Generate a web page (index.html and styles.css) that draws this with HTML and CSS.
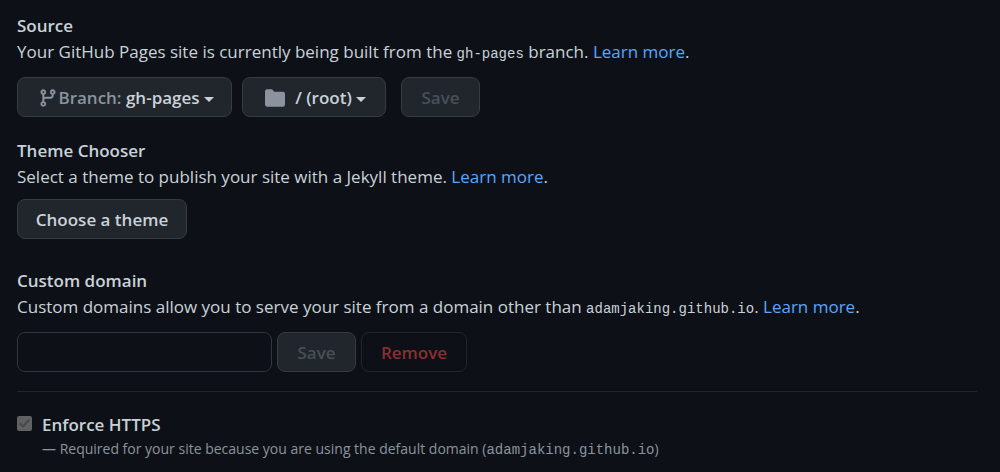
FILE: index.html
```html
<!DOCTYPE html>
<html lang="en">
<head>
<meta charset="utf-8">
<meta name="viewport" content="width=device-width, initial-scale=1">
<title>GitHub Pages settings</title>
<link rel="stylesheet" href="styles.css">
</head>
<body>
<main class="settings">
  <section class="section">
    <h2 class="heading">Source</h2>
    <p class="text">Your GitHub Pages site is currently being built from the <code class="code">gh-pages</code> branch. <a class="link" href="#">Learn more</a>.</p>
    <div class="actions actions-source">
      <button class="btn btn-branch" type="button">
        <svg class="icon" width="20" height="20" viewBox="0 0 16 16" aria-hidden="true"><path fill-rule="evenodd" d="M11.75 2.5a.75.75 0 100 1.5.75.75 0 000-1.5zm-2.25.75a2.25 2.25 0 113 2.122V6A2.5 2.5 0 0110 8.5H6a1 1 0 00-1 1v1.128a2.251 2.251 0 11-1.5 0V5.372a2.25 2.25 0 111.5 0v1.836A2.492 2.492 0 016 7h4a1 1 0 001-1v-.628A2.25 2.25 0 019.5 3.25zM4.25 12a.75.75 0 100 1.5.75.75 0 000-1.5zM3.5 3.25a.75.75 0 111.5 0 .75.75 0 01-1.5 0z"/></svg>
        <span><span class="btn-label">Branch:</span> gh-pages</span>
        <span class="caret"></span>
      </button>
      <button class="btn btn-folder" type="button">
        <svg class="icon" width="20" height="20" viewBox="0 0 16 16" aria-hidden="true"><path d="M1.75 1A1.75 1.75 0 000 2.75v10.5C0 14.216.784 15 1.75 15h12.5A1.75 1.75 0 0016 13.250v-8.500A1.750 1.750 0 0014.250 3H7.500a.25.25 0 01-.2-.1l-.9-1.2C6.070 1.260 5.550 1 5 1H1.750z"/></svg>
        <span>/ (root)</span>
        <span class="caret"></span>
      </button>
      <button class="btn btn-save" type="button" disabled>Save</button>
    </div>
  </section>

  <section class="section">
    <h2 class="heading">Theme Chooser</h2>
    <p class="text">Select a theme to publish your site with a Jekyll theme. <a class="link" href="#">Learn more</a>.</p>
    <div class="actions actions-theme">
      <button class="btn btn-theme" type="button">Choose a theme</button>
    </div>
  </section>

  <section class="section section-domain">
    <h2 class="heading"><label for="domain">Custom domain</label></h2>
    <p class="text">Custom domains allow you to serve your site from a domain other than <code class="code">adamjaking.github.io</code>. <a class="link" href="#">Learn more</a>.</p>
    <form class="actions actions-domain">
      <input class="field" id="domain" type="text">
      <button class="btn btn-save" type="button" disabled>Save</button>
      <button class="btn btn-remove" type="button" disabled>Remove</button>
    </form>
  </section>

  <section class="enforce">
    <input class="check" id="https" type="checkbox" checked disabled aria-describedby="https-note">
    <div>
      <label class="heading" for="https">Enforce HTTPS</label>
      <p class="note" id="https-note">— Required for your site because you are using the default domain (<code class="code">adamjaking.github.io</code>)</p>
    </div>
  </section>
</main>
</body>
</html>
```
FILE: styles.css
```css
* {
  box-sizing: border-box;
}

body {
  margin: 0;
  background: #0d1117;
  color: #c9d1d9;
  font: 17px/26px "Segoe UI", "Open Sans", "Noto Sans", sans-serif;
}

.settings {
  padding: 13px 23px 12px 17px;
}

.section {
  margin-bottom: 21px;
}

.section-domain {
  margin: 29px 0 0;
  padding-bottom: 19px;
  border-bottom: 1px solid #21262d;
}

.heading {
  display: block;
  margin: 0;
  font-size: 17px;
  font-weight: 600;
}

.text,
.note {
  margin: 0;
}

.link {
  color: #58a6ff;
  text-decoration: none;
}

.code {
  font-family: Consolas, "Liberation Mono", monospace;
  font-size: 14px;
  line-height: 1;
}

.actions {
  display: flex;
  flex-wrap: wrap;
}

.actions-source {
  gap: 10px;
  margin-top: 12px;
}

.actions-source .btn-save {
  margin-left: 5px;
}

.actions-theme {
  margin-top: 9px;
}

.actions-domain {
  gap: 5px;
  margin-top: 12px;
}

.btn {
  display: flex;
  align-items: center;
  justify-content: center;
  height: 40px;
  padding: 2px 17px 0;
  border: 1px solid #363b42;
  border-radius: 8px;
  background: #21262d;
  color: #c9d1d9;
  font: inherit;
  font-weight: 600;
  white-space: nowrap;
}

.btn-branch {
  min-width: 215px;
  padding-left: 20px;
}

.btn-folder {
  min-width: 144px;
  padding-left: 20px;
}

.btn-folder .icon {
  margin-right: 10px;
}

.btn-theme {
  min-width: 170px;
}

.btn-save {
  min-width: 79px;
  color: #484f58;
}

.btn-remove {
  min-width: 106px;
  border-color: #21262d;
  background: #0d1117;
  color: #8b2f2f;
}

.btn-label {
  color: #8b949e;
}

.icon {
  flex: none;
  fill: #8b949e;
}

.caret {
  margin: 2px 0 0 4px;
  border: 5px solid transparent;
  border-top-color: #c9d1d9;
  border-bottom: 0;
}

.field {
  width: 255px;
  height: 40px;
  padding: 0 15px;
  border: 1px solid #30363d;
  border-radius: 8px;
  background: #0d1117;
  color: #c9d1d9;
  font: inherit;
}

.enforce {
  display: flex;
  gap: 10px;
  margin-top: 20px;
}

.check {
  display: grid;
  place-items: center;
  flex: none;
  width: 15px;
  height: 15px;
  margin: 4px 0 0;
  border-radius: 2px;
  background: #616161;
  appearance: none;
}

.check::before {
  content: "";
  width: 11px;
  height: 9px;
  background: #484848;
  clip-path: polygon(0 56%, 14% 40%, 36% 66%, 86% 0, 100% 14%, 37% 100%);
}

.note {
  color: #8b949e;
  font-size: 14px;
  line-height: 22px;
}
```
